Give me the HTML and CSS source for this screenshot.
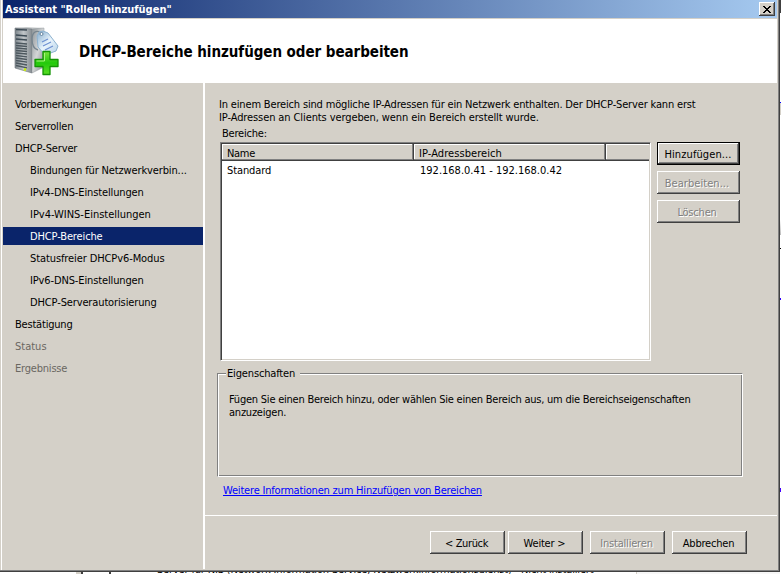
FILE: index.html
```
<!DOCTYPE html>
<html lang="de">
<head>
<meta charset="utf-8">
<title>Assistent "Rollen hinzufügen"</title>
<link rel="stylesheet" href="styles.css">
</head>
<body>
<div class="desktop"><div class="desktop-text">Server für NIS (Network Information Service, Netzwerkinformationsdienst) - Nicht installiert</div></div>
<div class="desktop-edge"></div>
<main class="window">
  <header class="titlebar">
    <span class="title">Assistent "Rollen hinzufügen"</span>
    <button class="close" aria-label="Schließen"><svg width="8" height="7" viewBox="0 0 8 7" shape-rendering="crispEdges"><path d="M0 0h2v1h1v1h2v-1h1v-1h2v1h-1v1h-1v1h-1v1h1v1h1v1h1v1h-2v-1h-1v-1h-2v1h-1v1h-2v-1h1v-1h1v-1h1v-1h-1v-1h-1v-1h-1z"/></svg></button>
  </header>
  <section class="banner">
    <svg class="logo" width="48" height="50" viewBox="0 0 48 50">
      <defs>
        <linearGradient id="front" x1="0" x2="1"><stop offset="0" stop-color="#7c858b"/><stop offset=".5" stop-color="#c0c5c8"/><stop offset="1" stop-color="#858c91"/></linearGradient>
        <linearGradient id="side" x1="0" x2="1" y2="1"><stop offset="0" stop-color="#8c9397"/><stop offset=".5" stop-color="#d4d6d7"/><stop offset="1" stop-color="#7b8185"/></linearGradient>
        <linearGradient id="tag" x1="0" x2="1" y2="1"><stop offset="0" stop-color="#82aacb"/><stop offset=".5" stop-color="#e9f4fc"/><stop offset="1" stop-color="#b3d0e6"/></linearGradient>
        <linearGradient id="plus" x1="0" x2="0" y2="1"><stop offset="0" stop-color="#7be33d"/><stop offset=".5" stop-color="#23c90b"/><stop offset="1" stop-color="#5ade24"/></linearGradient>
      </defs>
      <path d="M1 2l11-1 18 1-12 2z" fill="#c8cccd"/>
      <path d="M1 2l17 1v44L1 42z" fill="url(#front)" stroke="#697177" stroke-width=".6"/>
      <path d="M18 3l12-1v39l-12 6z" fill="url(#side)" stroke="#92999d" stroke-width=".5"/>
      <path d="M2 3.500l11 .5M2 9l11 1M2 13l11 1" stroke="#3d4b55" stroke-width="1.600"/>
      <path d="M2 17l11 1M2 19.500l11 1M2 22l11 1M2 24.500l11 1M2 27l11 1M2 29.500l11 1.300M2 32l11 1.500M2 34.500l11 1.700M2 37l11 2M2 39.500l11 2.300" stroke="#4d585f" stroke-width="1.300"/>
      <path d="M10 43.300l2 .7" stroke="#c9f000" stroke-width="2.500"/>
      <path d="M27 7c-5-4-9 0-9 6 0 7 2 10 6 11" fill="none" stroke="#77858e" stroke-width="1.400"/>
      <path d="M23 10l2-4 4-1 5 2 10 13-2 5-11 4-7-8z" fill="url(#tag)" stroke="#8db2cf"/>
      <circle cx="27.500" cy="8" r="1.500" fill="#fff" stroke="#63839e"/>
      <path d="M28 16l6-3M29 20l8-4M31 24l8-4" stroke="#6d8fd0" stroke-width="1.200"/>
      <path d="M29 25.500h7v8h8v7h-8v8h-7v-8h-8v-7h8z" fill="url(#plus)" stroke="#149406" stroke-width="1.300" stroke-linejoin="round"/>
      <path d="M30.500 27v8h-8" fill="none" stroke="#a8f57c"/>
    </svg>
    <h1>DHCP-Bereiche hinzufügen oder bearbeiten</h1>
  </section>
  <div class="content">
    <nav>
      <a class="n1">Vorbemerkungen</a>
      <a class="n2">Serverrollen</a>
      <a class="n3">DHCP-Server</a>
      <a class="sub n4">Bindungen für Netzwerkverbin...</a>
      <a class="sub n5">IPv4-DNS-Einstellungen</a>
      <a class="sub n6">IPv4-WINS-Einstellungen</a>
      <a class="sub n7 selected">DHCP-Bereiche</a>
      <a class="sub n8">Statusfreier DHCPv6-Modus</a>
      <a class="sub n9">IPv6-DNS-Einstellungen</a>
      <a class="sub n10">DHCP-Serverautorisierung</a>
      <a class="n11">Bestätigung</a>
      <a class="n12 off">Status</a>
      <a class="n13 off">Ergebnisse</a>
    </nav>
    <div class="pane">
      <div class="page">
        <p class="intro"><span class="i1">In einem Bereich sind mögliche IP-Adressen für ein Netzwerk enthalten. Der DHCP-Server kann erst</span><br><span class="i2">IP-Adressen an Clients vergeben, wenn ein Bereich erstellt wurde.</span></p>
        <div class="label">Bereiche:</div>
        <div class="ranges">
          <div class="list">
            <div class="row head"><span>Name</span><span class="c2">IP-Adressbereich</span><span></span></div>
            <div class="row"><span class="r1">Standard</span><span class="r2">192.168.0.41 - 192.168.0.42</span></div>
          </div>
          <div class="actions">
            <button class="default b1">Hinzufügen...</button>
            <button class="b2" disabled>Bearbeiten...</button>
            <button class="b3" disabled>Löschen</button>
          </div>
        </div>
        <fieldset><legend>Eigenschaften</legend>
          <p><span class="f1">Fügen Sie einen Bereich hinzu, oder wählen Sie einen Bereich aus, um die Bereichseigenschaften</span><br><span class="f2">anzuzeigen.</span></p>
        </fieldset>
        <a class="more">Weitere Informationen zum Hinzufügen von Bereichen</a>
      </div>
      <footer>
        <button class="b4">&lt; Zurück</button>
        <button class="b5">Weiter &gt;</button>
        <button class="b6 apart" disabled>Installieren</button>
        <button class="b7 apart">Abbrechen</button>
      </footer>
    </div>
  </div>
</main>
</body>
</html>
```
FILE: styles.css
```
* { box-sizing: border-box; }
body {
  margin: 0; width: 781px; height: 574px; overflow: hidden; position: relative;
  font: 11px/13px "DejaVu Sans Condensed", "DejaVu Sans", Tahoma, sans-serif;
  font-stretch: condensed;
  letter-spacing: -0.3px; color: #000; background: #fff; white-space: nowrap;
}
.desktop { position: absolute; left: 0; top: 572px; width: 781px; height: 2px; overflow: hidden;
  background: linear-gradient(90deg, #fff 76px, #d4d0c8 76px 81px, #404040 81px 83px, #fff 83px 109px, #404040 109px 111px, #fff 111px 636px, #d4d0c8 636px 637px, #f7f7f7 637px); }
.desktop-text { margin: -9px 0 0 157px; letter-spacing: -0.17px; }
.desktop-edge { position: absolute; left: 780px; top: 0; width: 1px; height: 574px;
  background: linear-gradient(#404040 13px, #fff 13px 102px, #00f 102px 103px, #d4d0c8 103px 115px, #fff 115px 220px, #bbb 235px, #fff 235px 248px, #000 248px 249px, #fff 249px 298px, #30f 298px 300px, #fff 300px 488px, #40f 488px 492px, #fff 492px); }
.window { position: relative; width: 780px; height: 572px; background: #d4d0c8;
  padding: 0 3px 3px; display: flex; flex-direction: column;
  box-shadow: inset -1px -1px #404040, inset -2px -2px #808080, inset 1px 0 #d4d0c8, inset 2px 0 #fff; }
.titlebar { height: 18px; flex: none; display: flex; align-items: center; justify-content: space-between;
  padding: 0 2px; background: linear-gradient(90deg, #0a246a, #a6caf0); color: #fff; }
.title { font-weight: bold; letter-spacing: 0; }
button { font: inherit; letter-spacing: -0.2px; color: #000; background: #d4d0c8; border: 0; padding: 2px 2px 0 0;
  width: 75px; height: 23px; flex: none;
  box-shadow: inset -1px -1px #404040, inset 1px 1px #fff, inset -2px -2px #808080; }
button:disabled { color: #808080; text-shadow: 1px 1px #fff; }
.close { width: 16px; height: 14px; padding: 0; display: flex; align-items: center; justify-content: center; }
.banner { height: 64px; flex: none; margin-top: 1px; background: #fff; display: flex; align-items: center; }
.logo { margin: 0 0 1px 11px; }
h1 { margin: 2px 0 0 17px; font-size: 15px; line-height: 18px; letter-spacing: -0.05px; }
.content { flex: 1; display: flex; }
nav { width: 202px; border-right: 2px solid #fff; padding-top: 10px; height: 486px; letter-spacing: -0.13px; }
nav a { display: block; height: 22px; line-height: 24px; padding-left: 12px; }
nav .sub { padding-left: 27px; }
nav .selected { height: 18px; line-height: 20px; margin: 2px 0; background: #0a246a; color: #fff; }
nav .off { color: #6a6762; }
.n1 { letter-spacing: -0.22px; }
.n6 { letter-spacing: -0.02px; }
.n8 { letter-spacing: -0.1px; }
.n11, .n13 { letter-spacing: -0.2px; }
.n12 { letter-spacing: 0; }
.pane { width: 572px; display: flex; flex-direction: column; }
.page { height: 432px; padding: 15px 0 0 12px; }
.intro { margin: 0 0 0 2px; }
.i1 { letter-spacing: -0.165px; }
.i2 { letter-spacing: -0.1px; }
.label { margin: 3px 0 0 5px; letter-spacing: -0.2px; }
.ranges { display: flex; gap: 6px; margin: 2px 0 0 3px; }
.list { width: 431px; height: 219px; background: #fff; border: 1px solid; border-color: #808080 #fff #fff #808080;
  box-shadow: inset 1px 1px #404040, inset -1px -1px #d4d0c8; padding: 1px; }
.row { display: grid; grid-template-columns: 192px 192px 43px; line-height: 19px; }
.row span { padding-left: 5px; }
.row .c2 { letter-spacing: 0.07px; }
.row .r1 { letter-spacing: -0.1px; }
.row .r2 { padding-left: 6px; letter-spacing: 0; }
.head { height: 17px; }
.head span { height: 17px; background: #d4d0c8; line-height: 19px; border-bottom: 1px solid #404040;
  box-shadow: inset -1px 0 #404040, inset -2px -1px #808080, inset 1px 1px #fff; }
.head span:last-child { box-shadow: inset 0 -1px #808080, inset 1px 1px #fff; }
.actions { display: flex; flex-direction: column; gap: 6px; }
.actions button { width: 83px; padding-right: 3px; }
.actions .default { border: 1px solid #000; }
.actions .b1 { letter-spacing: 0.1px; padding-right: 1px; }
.actions .b2 { letter-spacing: 0.05px; }
.b4 { letter-spacing: -0.35px; }
fieldset { position: relative; width: 526px; height: 104px; margin: 12px 0 0; padding: 19px 0 0 11px;
  border: 1px solid #808080; border-right-color: #fff; border-bottom-color: #fff;
  box-shadow: inset 1px 1px #fff, inset -1px -1px #808080; }
legend { position: absolute; left: 8px; top: -7px; width: 74px; padding: 0 1px; background: #d4d0c8; letter-spacing: -0.15px; }
fieldset p { margin: 0; letter-spacing: -0.225px; }
.more { display: inline-block; margin: 7px 0 0 6px; color: #00f; text-decoration: underline; letter-spacing: -0.19px; }
footer { height: 54px; border-top: 1px solid #fff; padding: 15px 0 0 225px; display: flex; gap: 3px; }
footer .apart { margin-left: 4px; }
```
